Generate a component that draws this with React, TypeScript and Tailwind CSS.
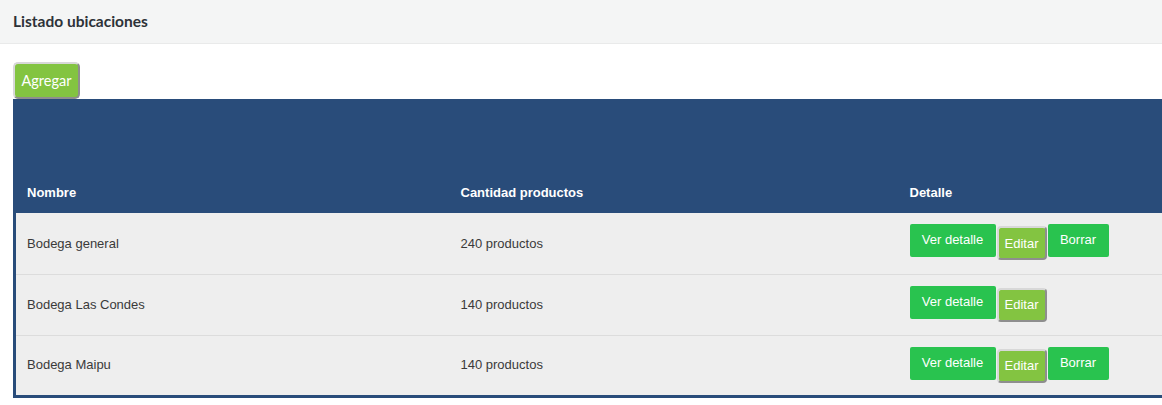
import React from "react";

const rows = [
  { name: "Bodega general", qty: "240 productos", borrar: true },
  { name: "Bodega Las Condes", qty: "140 productos", borrar: false },
  { name: "Bodega Maipu", qty: "140 productos", borrar: true },
];

export default function App() {
  return (
    <div className="w-[1162px] h-[405px] overflow-hidden bg-white">
      <div className="h-[44px] bg-[#f4f5f5] border-b border-[#e9eaea] flex items-center pl-[13px]">
        <span className="text-[15.5px] font-bold text-[#2d3238] font-['Lato',sans-serif]">Listado ubicaciones</span>
      </div>
      <div className="pl-[13px] pt-[18px]">
        <button className="h-[37px] w-[67px] bg-[#83c441] text-white text-[14.5px] font-['Lato',sans-serif] rounded-[5px] border-2 border-t-[#d8d8d8] border-l-[#d8d8d8] border-r-[#8e8e8e] border-b-[#8e8e8e] flex items-center justify-center">
          Agregar
        </button>
        <table className="w-[1300px] border-collapse font-['Liberation_Sans',Arial,sans-serif] text-[13px] border-l-[3px] border-b-[3px] border-[#294c7a] table-fixed">
          <thead>
            <tr className="bg-[#294c7a] text-white">
              <th className="w-[446px] h-[114px] align-bottom text-left font-bold pl-[11px] pb-[11px]">Nombre</th>
              <th className="w-[449px] h-[114px] align-bottom text-left font-bold pl-0 pb-[11px]">Cantidad productos</th>
              <th className="h-[114px] align-bottom text-left font-bold pl-0 pb-[11px]">Detalle</th>
            </tr>
          </thead>
          <tbody>
            {rows.map((r, i) => (
              <tr key={i} className={`bg-[#eeeeee] text-[#3a3a3a] ${i < rows.length - 1 ? "border-b border-[#dcdcdc]" : ""}`}>
                <td className="h-[61px] pl-[11px] align-middle">{r.name}</td>
                <td className="h-[61px] align-middle">{r.qty}</td>
                <td className="h-[61px] align-top">
                  <div className="flex items-start pt-[11px]">
                    <button className="h-[33px] w-[86px] bg-[#29c34f] text-white text-[13px] rounded-[2px] flex items-center justify-center pb-[1px]">Ver detalle</button>
                    <button className="h-[34px] w-[50px] ml-[1px] mt-[2px] bg-[#83c441] text-white text-[13px] rounded-[4px] border-2 border-t-[#d8d8d8] border-l-[#d8d8d8] border-r-[#8e8e8e] border-b-[#8e8e8e] flex items-center justify-center pt-[1px]">Editar</button>
                    {r.borrar && (
                      <button className="h-[33px] w-[61px] ml-[1px] bg-[#29c34f] text-white text-[13px] rounded-[2px] flex items-center justify-center pb-[1px]">Borrar</button>
                    )}
                  </div>
                </td>
              </tr>
            ))}
          </tbody>
        </table>
      </div>
    </div>
  );
}
